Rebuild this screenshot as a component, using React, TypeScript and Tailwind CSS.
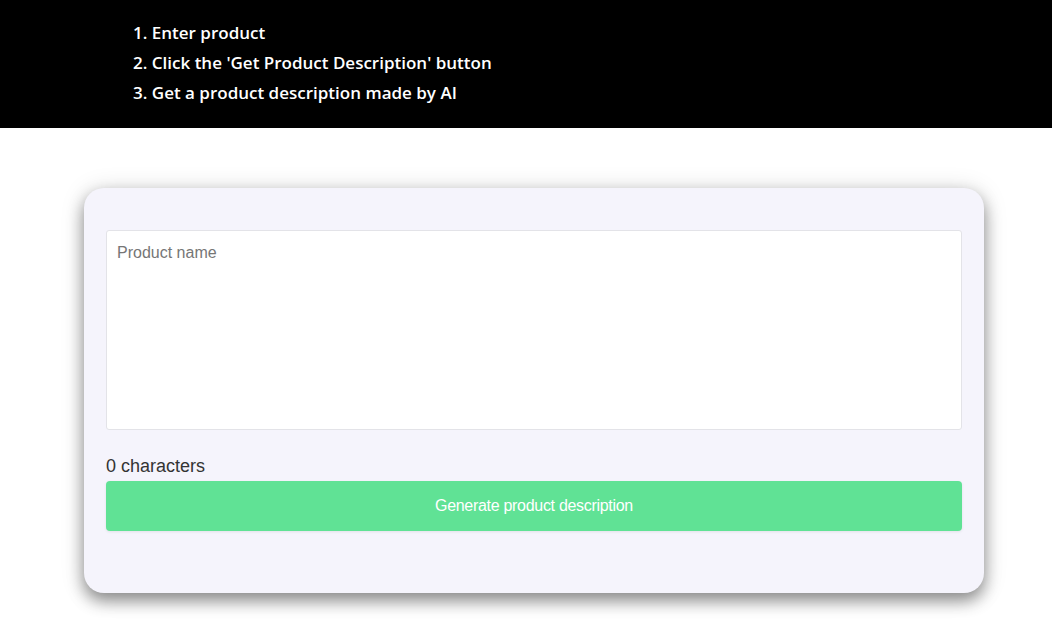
export default function App() {
  return (
    <div className="min-h-[634px] bg-white">
      <div className="bg-black h-[128px] pt-[18px] pl-[133px] font-['Open_Sans',sans-serif] text-white text-[17px] font-semibold">
        <ol className="flex flex-col">
          <li className="leading-[30px]">1. Enter product</li>
          <li className="leading-[30px]">2. Click the 'Get Product Description' button</li>
          <li className="leading-[30px]">3. Get a product description made by AI</li>
        </ol>
      </div>

      <div className="pt-[60px] pl-[84px]">
        <div className="w-[900px] h-[405px] rounded-[20px] bg-[#f5f4fc] shadow-[0_8px_16px_rgba(0,0,0,0.4),0_2px_24px_rgba(0,0,0,0.15)] px-[22px] pt-[42px] font-['Liberation_Sans',Arial,sans-serif]">
          <textarea
            placeholder="Product name"
            className="block w-full h-[200px] resize-none bg-white border border-[#e3e3e8] rounded-[3px] px-[10px] py-[10px] text-[16px] text-gray-800 placeholder:text-[#767676] outline-none"
          />
          <div className="mt-[24px] text-[18px] leading-[24px] text-[#333]">0 characters</div>
          <button className="mt-[3px] w-full h-[50px] rounded-[4px] bg-[#60e295] text-white text-[16px] tracking-[-0.3px] shadow-[0_1px_3px_rgba(0,0,0,0.08)]">
            Generate product description
          </button>
        </div>
      </div>
    </div>
  );
}
